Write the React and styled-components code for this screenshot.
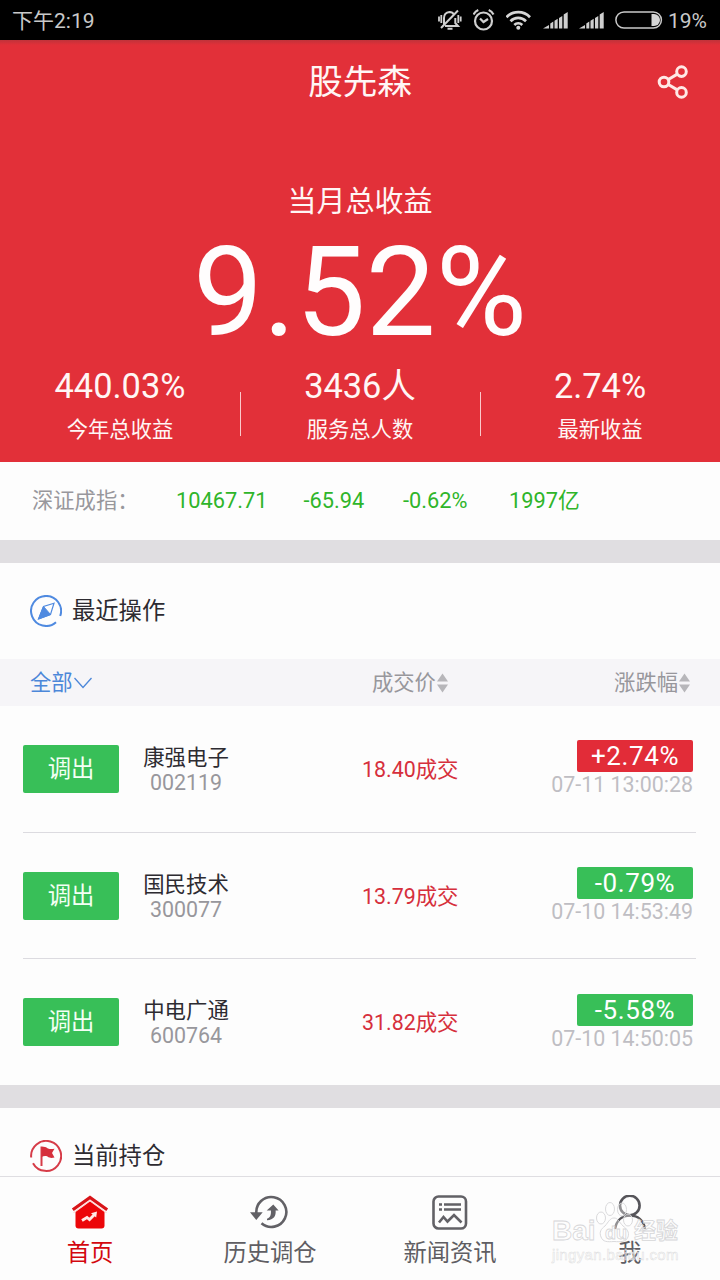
import React from "react";
import styled, { createGlobalStyle } from "styled-components";

const GlobalStyle = createGlobalStyle`
  *, *::before, *::after { box-sizing: border-box; }
  body {
    margin: 0;
    background: #fdfdfd;
    font-family: Roboto, "Noto Sans CJK SC", sans-serif;
    -webkit-font-smoothing: antialiased;
  }
  svg { display: block; flex: none; }
`;

const Screen = styled.div`
  position: relative;
  display: flex;
  flex-direction: column;
  width: 720px;
  height: 1280px;
  overflow: hidden;
  background: #fdfdfd;
`;

const StatusBar = styled.div`
  display: flex;
  align-items: center;
  justify-content: space-between;
  flex: none;
  height: 40px;
  padding: 2px 12px 0;
  background: #000;
  color: #c9c9c9;
  font-size: 21px;
  line-height: 38px;
`;

const StatusIcons = styled.div`
  display: flex;
  align-items: center;
  gap: 11px;
  height: 36px;
  margin-top: -2px;
`;

const BatteryText = styled.span`
  margin: 2px 0 0 -6px;
  padding-right: 1px;
`;

const Hero = styled.header`
  flex: none;
  display: flex;
  flex-direction: column;
  height: 422px;
  background: linear-gradient(#c0333a 0, #e23039 5px);
  color: #fff6f5;
`;

const TitleBar = styled.div`
  display: grid;
  grid-template-columns: 1fr auto 1fr;
  align-items: center;
  height: 84px;
  padding: 0 31px;
`;

const Title = styled.h1`
  grid-column: 2;
  margin: 0;
  font-size: 34.6px;
  font-weight: 400;
  line-height: 40px;
`;

const ShareButton = styled.button`
  justify-self: end;
  padding: 0;
  border: 0;
  background: none;
`;

const HeroLabel = styled.div`
  margin-top: 58px;
  text-align: center;
  font-size: 29px;
  line-height: 40px;
`;

const HeroValue = styled.div`
  margin-top: 8px;
  height: 125px;
  text-align: center;
  color: #fffdfd;
  font-size: 124.5px;
  line-height: 124px;
`;

const Stats = styled.div`
  display: flex;
  padding-top: 11px;
`;

const Stat = styled.div`
  flex: 1;
  display: flex;
  flex-direction: column;
  align-items: center;
  position: relative;

  & + &::before {
    content: "";
    position: absolute;
    left: -0.5px;
    top: 26px;
    width: 1px;
    height: 44px;
    background: #fbc9cb;
  }
`;

const StatValue = styled.div`
  font-size: 34.4px;
  line-height: 40px;
  height: 44px;
`;

const StatLabel = styled.div`
  font-size: 21.3px;
  line-height: 40px;
`;

const IndexRow = styled.div`
  flex: none;
  display: flex;
  align-items: center;
  height: 78px;
  padding-left: 32px;
  font-size: 21.8px;
  line-height: 30px;
  color: #2fb52a;
`;

const IndexName = styled.span`
  width: 144px;
  color: #98979c;
  font-size: 21.3px;
`;

const IndexValue = styled.span`
  width: ${(p) => p.$width}px;
`;

const Band = styled.div`
  flex: none;
  height: 23px;
  background: #e0dee1;
`;

const SectionHead = styled.div`
  flex: none;
  display: flex;
  align-items: center;
  gap: 10px;
  height: 96px;
  padding-left: 30px;
  color: #2d2b31;
  font-size: 23.3px;
  line-height: 30px;
`;

const SectionTitle = styled.span``;

const TableHead = styled.div`
  flex: none;
  display: grid;
  grid-template-columns: 342px 160px 1fr;
  align-items: center;
  height: 47px;
  padding: 1px 29px 0 30px;
  background: #f6f5f8;
  color: #98979c;
  font-size: 21.3px;
  line-height: 30px;
`;

const HeadCell = styled.div`
  display: flex;
  align-items: center;
  gap: 1px;
  justify-content: ${(p) => p.$align || "flex-start"};
  color: ${(p) => (p.$active ? "#4c87d9" : "inherit")};
`;

const List = styled.div`
  flex: none;
  display: flex;
  flex-direction: column;
  padding: 0 24px 0 23px;
`;

const Row = styled.div`
  display: grid;
  grid-template-columns: 96px 134px 1fr 142px;
  align-items: center;
  height: ${(p) => (p.$last ? 126 : 126.7)}px;
  border-bottom: ${(p) => (p.$last ? "0" : "1px solid #dcdbe0")};
  padding-right: 3px;
`;

const ActionButton = styled.button`
  height: 48px;
  padding: 0;
  border: 0;
  border-radius: 2px;
  background: #38bf58;
  color: #f3fff4;
  font: inherit;
  font-size: 23.3px;
  line-height: 30px;
`;

const Stock = styled.div`
  padding-top: 2px;
  text-align: center;
  font-size: 21.4px;
  line-height: 25px;
`;

const StockName = styled.div`
  color: #2d2b31;
`;

const StockCode = styled.div`
  color: #98979c;
`;

const Price = styled.div`
  padding: 2px 0 0 109px;
  color: #d62f3c;
  font-size: 21.4px;
  line-height: 30px;
`;

const Change = styled.div`
  display: flex;
  flex-direction: column;
  align-items: flex-end;
`;

const Badge = styled.div`
  width: 116px;
  height: 32px;
  border-radius: 2px;
  background: ${(p) => (p.$up ? "#e22c38" : "#38bf58")};
  color: #fff;
  text-align: center;
  font-size: 26px;
  line-height: 32px;
  letter-spacing: 0.6px;
`;

const Time = styled.div`
  color: #bfbec3;
  font-size: 21.4px;
  line-height: 25px;
  white-space: nowrap;
`;

const TabBar = styled.nav`
  position: absolute;
  left: 0;
  right: 0;
  bottom: 0;
  display: flex;
  height: 104px;
  border-top: 1px solid #dfdee2;
  background: #fdfdfd;
`;

const Tab = styled.div`
  flex: 1;
  display: flex;
  flex-direction: column;
  align-items: center;
  gap: 2px;
  padding-top: 18px;
  color: ${(p) => (p.$active ? "#d3080f" : "#5f5e63")};
  font-size: 23.3px;
  line-height: 40px;
`;

const Watermark = styled.div`
  position: absolute;
  left: 552px;
  top: 1200px;
  width: 130px;
  color: rgba(255, 255, 255, 0.45);
  font-family: "Liberation Sans", "Noto Sans CJK SC", sans-serif;
  font-weight: 700;
`;

const WatermarkBrand = styled.div`
  position: relative;
  display: flex;
  align-items: flex-end;
  height: 46px;
  font-size: 28px;
  line-height: 30px;
  -webkit-text-stroke: 0.8px #d6d6d8;
`;

const WatermarkName = styled.span`
  width: 53px;
`;

const WatermarkDu = styled.span`
  width: 29px;
  font-size: 18px;
  line-height: 26px;
`;

const WatermarkCn = styled.span`
  font-size: 22px;
`;

const WatermarkUrl = styled.div`
  font-size: 15px;
  font-weight: 400;
  line-height: 18px;
  letter-spacing: 0.35px;
  -webkit-text-stroke: 0.5px #dedee0;
`;

const Paw = styled.svg`
  position: absolute;
  left: 42px;
  top: 0;
`;

const MuteIcon = () => (
  <svg width="24" height="22" viewBox="0 0 24 22" fill="none" stroke="#cfcfcf" strokeWidth="2">
    <path d="M6 15.500V9c0-3.600 2.200-5.500 5.500-6 2 .1 3.600 1 4.500 2.600M17.300 9v5l2.700 3H7M9.500 19.700h5" />
    <path d="M20 1.500 3 19" />
    <path d="M1 7.500v5M3.300 6v8M20.300 6v8M22.700 7.500v5" strokeWidth="1.800" />
  </svg>
);

const AlarmIcon = () => (
  <svg width="22" height="22" viewBox="0 0 22 22" fill="none" stroke="#cfcfcf" strokeWidth="2.200">
    <circle cx="10.500" cy="12" r="8.500" />
    <path d="M.5 5.500C1.500 3.500 3 2 5.300 1M20.500 5.500C19.500 3.500 18 2 15.700 1M7 9.500l3.500 3.500 4.500-3" />
  </svg>
);

const WifiIcon = () => (
  <svg width="26" height="20" viewBox="0 0 26 20" fill="none" stroke="#d6d6d6" strokeWidth="2.700">
    <path d="M.5 7.200C7 .5 17.500.5 24 7.200M4.500 11.200c4.300-4.400 11-4.400 15.500 0M8.300 15c2.300-2.100 5.700-2.100 8 0" />
    <circle cx="12.300" cy="17.800" r="2" fill="#d6d6d6" stroke="none" />
  </svg>
);

const SignalIcon = () => (
  <svg width="25" height="18" viewBox="0 0 25 18" fill="#cfcfcf">
    <path d="M0 17.500 6 14v3.500zM7.300 12.500l3-1.900v6.900h-3zM11.500 9.800l3.200-2v9.700h-3.200zM16 7l3.300-2v12.500H16zM20.700 3.500 24.700 1v16.500h-4z" />
  </svg>
);

const BatteryIcon = () => (
  <svg width="48" height="18" viewBox="0 0 48 18" fill="none">
    <rect x="0.900" y="0.900" width="45.500" height="16.200" rx="8.100" stroke="#c9c9c9" strokeWidth="1.500" />
    <path d="M36.500 3H39a6 6 0 0 1 0 12h-2.500z" fill="#d6d6d6" />
  </svg>
);

const ShareIcon = () => (
  <svg width="32" height="34" viewBox="0 0 32 34" fill="none" stroke="#ffe9e6" strokeWidth="3">
    <circle cx="7" cy="17" r="4.800" />
    <circle cx="24.500" cy="6.600" r="4.800" />
    <circle cx="24.500" cy="27.400" r="4.800" />
    <path d="m11.300 14.500 9-5.400M11.300 19.500l9 5.400" />
  </svg>
);

const CompassIcon = () => (
  <svg width="32" height="32" viewBox="0 0 32 32" fill="none" stroke="#4f8ae0" strokeWidth="2">
    <path d="M30.200 21A15 15 0 1 0 26 27.200" />
    <path d="M24 8.200 13.500 11.500 8.500 24 20.500 19.500z" strokeWidth="1.200" />
    <path d="M13.500 11.500 8.500 24 20.500 19.500z" fill="#4f8ae0" strokeWidth="1" />
  </svg>
);

const FlagIcon = () => (
  <svg width="32" height="32" viewBox="0 0 32 32" fill="none" stroke="#d63c48" strokeWidth="2">
    <path d="M1.200 17.500A15 15 0 1 1 3 23.200" />
    <path d="M11.500 6.500V26" />
    <path d="M11.500 7c3-1 5 .2 6.500 1.500 2 .8 4 .6 6.500.3L22 13l2.500 4.500c-3 .8-5 .5-7-1-2-.8-4-.6-6 .5z" fill="#d62f3c" stroke="none" />
  </svg>
);

const ChevronIcon = () => (
  <svg width="19" height="12" viewBox="0 0 19 12" fill="none" stroke="#4c87d9" strokeWidth="1.300">
    <path d="m.5 1 8.500 9.500L17.500 1" />
  </svg>
);

const SortIcon = () => (
  <svg width="12" height="20" viewBox="0 0 12 20" fill="#b7b6ba">
    <path d="M5.500 .5 11 8.500H0zM5.500 19.500 0 11.500h11z" />
  </svg>
);

const HomeIcon = () => (
  <svg width="38" height="36" viewBox="0 0 38 36" fill="none">
    <path d="M4.500 16.500 19 6l14.500 10.500V30.500a3 3 0 0 1-3 3h-23a3 3 0 0 1-3-3z" fill="#ec0609" />
    <path d="M2.500 17.800 19 5.800l16.500 12" stroke="#ffd9d6" strokeWidth="1.300" />
    <path d="M1.800 14.800 19 2.500l17.200 12.300" stroke="#d81418" strokeWidth="3.200" />
    <path d="m11 25.500 5-3 2.500 2 5-5" stroke="#ffe9e6" strokeWidth="2.800" />
    <path d="m20 18.200 6-1.700-.8 6z" fill="#ffe9e6" />
  </svg>
);

const HistoryIcon = () => (
  <svg width="40" height="36" viewBox="0 0 40 36" fill="none" stroke="#626166" strokeWidth="2.600">
    <path d="M6.400 18.500A15 15 0 1 1 11.500 28.300" />
    <path d="M0 17.300h12.700L6.300 25z" fill="#626166" stroke="none" />
    <path d="M23.300 9.500 28.600 15.500h-3c.6 5-1.600 9.500-8.600 9.700v-1.500c3.500-1.200 4.200-4.200 3.900-8.200h-4.200z" fill="#626166" stroke="none" />
  </svg>
);

const NewsIcon = () => (
  <svg width="36" height="36" viewBox="0 0 36 36" fill="none" stroke="#626166" strokeWidth="2.600">
    <rect x="1.500" y="1.500" width="32.500" height="32" rx="5" />
    <path d="M7 9.500h3M12 9.500h17M7 14.500h3M12 14.500h17M7 27.500l4.500-5.500L15.500 26.500l6.500-6.500 7.500 7.500" />
  </svg>
);

const UserIcon = () => (
  <svg width="36" height="36" viewBox="0 0 36 36" fill="none" stroke="#56555a" strokeWidth="2.600">
    <circle cx="17.800" cy="10.500" r="9.800" />
    <path d="M3 34C4.500 25 10.500 20.500 18 20.500s13.500 4.500 15 13.500" />
  </svg>
);

const PawIcon = () => (
  <Paw width="40" height="46" viewBox="0 0 40 46" fill="rgba(255,255,255,0.35)" stroke="#dadadc" strokeWidth="1">
    <ellipse cx="7" cy="18" rx="4.500" ry="6" />
    <ellipse cx="16" cy="9" rx="4.500" ry="6.500" />
    <ellipse cx="28" cy="9.500" rx="4.500" ry="6.500" />
    <ellipse cx="34" cy="20" rx="4.500" ry="6" />
    <path d="M20 18c-4 0-5.500 4-9 8-4 3-6 6-4 11 2 5 6 5 13 4.500 7 .5 12 .5 14-4.500 1.500-5-1-8-5-11-4-4-5-8-9-8z" />
  </Paw>
);

const stats = [
  { value: "440.03%", label: "今年总收益" },
  { value: "3436人", label: "服务总人数" },
  { value: "2.74%", label: "最新收益" },
];

const indexValues = [
  { text: "10467.71", width: 127.5 },
  { text: "-65.94", width: 99.5 },
  { text: "-0.62%", width: 106 },
  { text: "1997亿", width: 80 },
];

const trades = [
  { name: "康强电子", code: "002119", price: "18.40成交", change: "+2.74%", time: "07-11 13:00:28", up: true },
  { name: "国民技术", code: "300077", price: "13.79成交", change: "-0.79%", time: "07-10 14:53:49" },
  { name: "中电广通", code: "600764", price: "31.82成交", change: "-5.58%", time: "07-10 14:50:05" },
];

const tabs = [
  { label: "首页", Icon: HomeIcon, active: true },
  { label: "历史调仓", Icon: HistoryIcon },
  { label: "新闻资讯", Icon: NewsIcon },
  { label: "我", Icon: UserIcon },
];

export default function App() {
  return (
    <Screen>
      <GlobalStyle />
      <StatusBar>
        <span>下午2:19</span>
        <StatusIcons>
          <MuteIcon />
          <AlarmIcon />
          <WifiIcon />
          <SignalIcon />
          <SignalIcon />
          <BatteryIcon />
          <BatteryText>19%</BatteryText>
        </StatusIcons>
      </StatusBar>

      <Hero>
        <TitleBar>
          <Title>股先森</Title>
          <ShareButton aria-label="分享">
            <ShareIcon />
          </ShareButton>
        </TitleBar>
        <HeroLabel>当月总收益</HeroLabel>
        <HeroValue>9.52%</HeroValue>
        <Stats>
          {stats.map((s) => (
            <Stat key={s.label}>
              <StatValue>{s.value}</StatValue>
              <StatLabel>{s.label}</StatLabel>
            </Stat>
          ))}
        </Stats>
      </Hero>

      <IndexRow>
        <IndexName>深证成指：</IndexName>
        {indexValues.map((v) => (
          <IndexValue key={v.text} $width={v.width}>{v.text}</IndexValue>
        ))}
      </IndexRow>
      <Band />

      <SectionHead>
        <CompassIcon />
        <SectionTitle>最近操作</SectionTitle>
      </SectionHead>
      <TableHead>
        <HeadCell $active>全部<ChevronIcon /></HeadCell>
        <HeadCell>成交价<SortIcon /></HeadCell>
        <HeadCell $align="flex-end">涨跌幅<SortIcon /></HeadCell>
      </TableHead>
      <List>
        {trades.map((t, i) => (
          <Row key={t.code} $last={i === trades.length - 1}>
            <ActionButton>调出</ActionButton>
            <Stock>
              <StockName>{t.name}</StockName>
              <StockCode>{t.code}</StockCode>
            </Stock>
            <Price>{t.price}</Price>
            <Change>
              <Badge $up={t.up}>{t.change}</Badge>
              <Time>{t.time}</Time>
            </Change>
          </Row>
        ))}
      </List>
      <Band />
      <SectionHead>
        <FlagIcon />
        <SectionTitle>当前持仓</SectionTitle>
      </SectionHead>

      <TabBar>
        {tabs.map(({ label, Icon, active }) => (
          <Tab key={label} $active={active}>
            <Icon />
            {label}
          </Tab>
        ))}
      </TabBar>

      <Watermark>
        <PawIcon />
        <WatermarkBrand>
          <WatermarkName>Bai</WatermarkName>
          <WatermarkDu>du</WatermarkDu>
          <WatermarkCn>经验</WatermarkCn>
        </WatermarkBrand>
        <WatermarkUrl>jingyan.baidu.com</WatermarkUrl>
      </Watermark>
    </Screen>
  );
}
